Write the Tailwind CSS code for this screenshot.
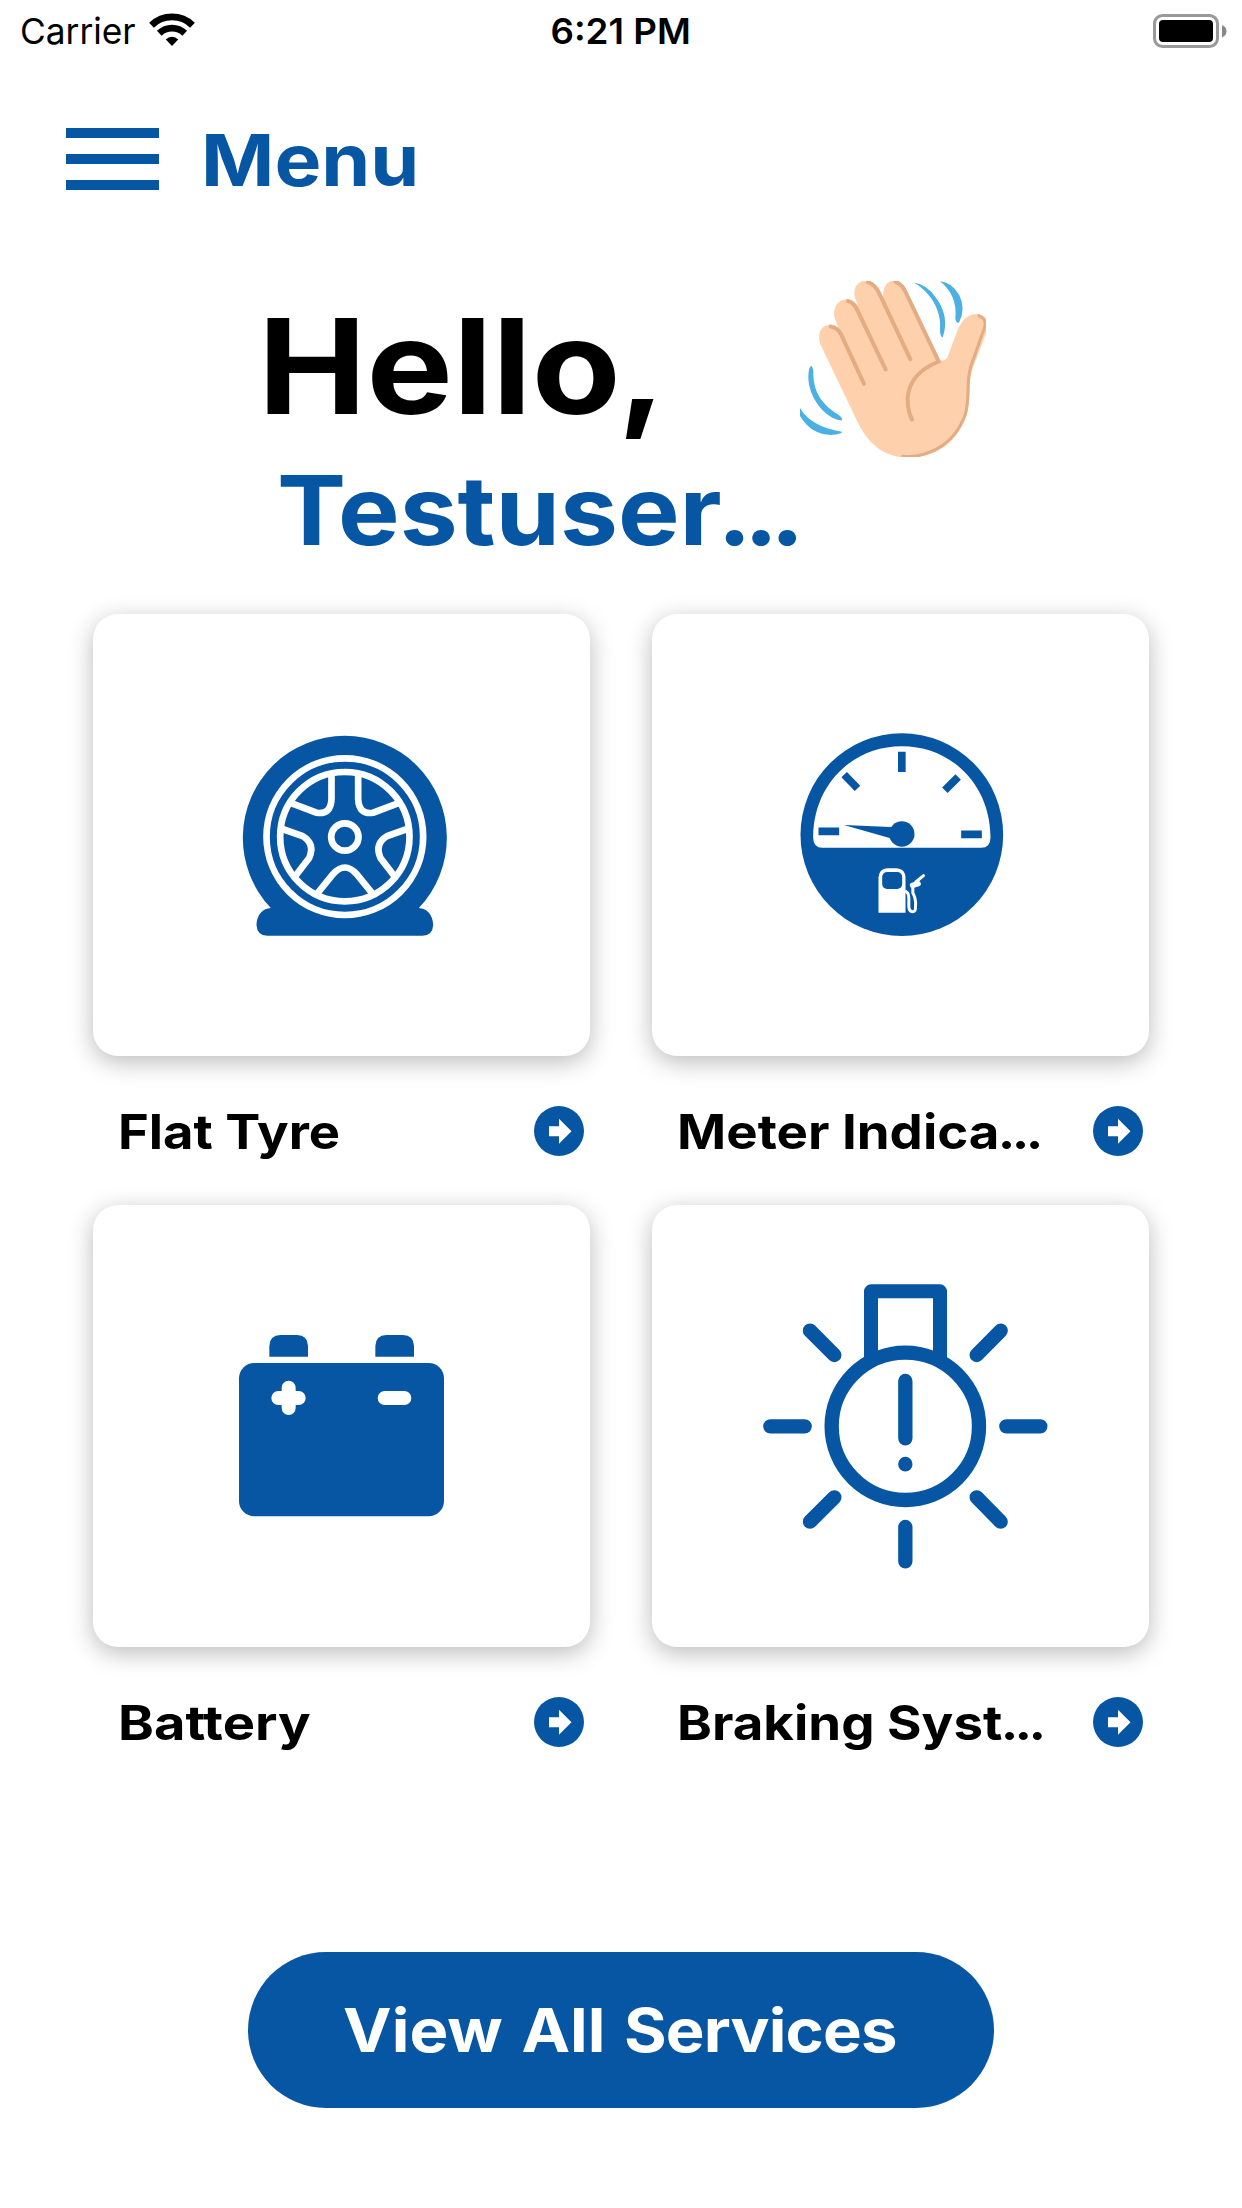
<!DOCTYPE html>
<html lang="en">
<head>
<meta charset="utf-8">
<title>Services</title>
<script src="https://cdn.jsdelivr.net/npm/@tailwindcss/browser@4"></script>
</head>
<body class="bg-white">
<div class="flex h-[2208px] w-[1242px] flex-col overflow-hidden bg-white font-['Inter',sans-serif] text-black">

  <!-- Status bar -->
  <div class="grid h-[62px] grid-cols-3 items-center pl-[20px] pr-[15px] text-[36px] leading-none">
    <div class="flex items-center">
      <span class="w-[129px] origin-left scale-x-[0.98] whitespace-nowrap">Carrier</span>
      <svg class="-mt-1 h-[33px] w-[46px]" viewBox="0 0 46 33" fill="none" stroke="#000">
        <path d="M2.5 12.2a29.5 29.5 0 0 1 41 0" stroke-width="6.8"/>
        <path d="M10.3 20.2a18.2 18.2 0 0 1 25.4 0" stroke-width="6.8"/>
        <path d="M23 33l-6.2-6.6a8.8 8.8 0 0 1 12.4 0z" fill="#000" stroke="none"/>
      </svg>
    </div>
    <span class="scale-x-[1.02] whitespace-nowrap pr-[5px] text-center font-semibold">6:21 PM</span>
    <svg class="h-[34px] w-[74px] justify-self-end" viewBox="0 0 74 34">
      <rect x="1.5" y="1.5" width="63" height="31" rx="8" fill="none" stroke="#999" stroke-width="3"/>
      <rect x="6" y="6" width="54" height="22" rx="4" fill="#000"/>
      <path d="M69 11q4.500 2 4.500 6.200t-4.500 6.200z" fill="#888"/>
    </svg>
  </div>

  <!-- Menu -->
  <div class="flex h-[196px] items-center pl-[65.5px] text-[#0756a4]">
    <div class="-mt-0.5 flex w-[93px] flex-col gap-4">
      <div class="h-[10px] bg-[#0756a4]"></div>
      <div class="h-[10px] bg-[#0756a4]"></div>
      <div class="h-[10px] bg-[#0756a4]"></div>
    </div>
    <span class="ml-[42px] origin-left scale-x-[1.094] text-7xl leading-none font-bold">Menu</span>
  </div>

  <!-- Greeting -->
  <div class="flex h-[216px] items-center pl-[258px]">
    <span class="w-[542px] origin-left scale-x-[1.1] text-[132px] leading-none font-bold">Hello<span class="-ml-[3px]">,</span></span>
    <svg class="mt-1.5 h-[176px] w-[186px] shrink-0" viewBox="60 63 558 527">
      <path d="M120 250C105 190 160 180 178 212L163 170C155 115 215 100 235 140L224 110C215 55 275 45 296 90L310 110C305 55 358 45 378 88L480 300Q497 305 503 290L532 212C550 160 600 148 620 178V215L578 325C562 370 575 420 558 470C520 570 445 594 375 592C300 588 260 540 232 484Z" fill="#ffd0ac"/>
      <g fill="none" stroke="#e3ac83" stroke-width="12" stroke-linecap="round">
        <path d="M152 199Q172 202 183 222L252 371"/>
        <path d="M204 123Q222 128 232 150L317 328"/>
        <path d="M264 66Q285 74 296 96L391 297"/>
        <path d="M346 65Q365 71 376 94L476 304Q388 340 383 413Q382 450 396 478"/>
        <path d="M597 167Q626 178 609 215L572 320C557 370 571 418 555 465C520 560 435 594 368 588" stroke-width="9"/>
      </g>
      <g fill="#4bb0e2">
        <path d="M402 68Q440 72 468 113Q510 170 488 232Q480 228 480 210C486 150 450 95 402 68Z"/>
        <path d="M480 63Q515 65 538 105Q558 145 537 187Q528 190 526 175Q533 105 480 63Z"/>
        <path d="M95 317Q86 319 85 348C84 410 135 476 185 481Q190 473 173 462C122 430 98 390 100 330Z"/>
        <path d="M58 440Q90 500 186 515Q188 521 160 524Q94 527 58 464Z"/>
      </g>
    </svg>
  </div>
  <div class="flex h-[72px] items-center pl-[277px] text-[#0756a4]">
    <span class="origin-left scale-x-[1.078] text-8xl leading-none font-bold">Testuser<span class="-ml-[4px] tracking-[-0.08em]">...</span></span>
  </div>

  <!-- Services -->
  <div class="mt-[68px] grid grid-cols-[497px_497px] gap-x-[62px] pl-[93px] text-5xl leading-none font-bold">
    <div>
      <div class="flex h-[442px] items-center justify-center rounded-[25px] bg-white shadow-[0_6px_24px_rgba(0,0,0,0.27)]">
        <svg class="size-[230px]" viewBox="-8.500 1 690 690">
          <path d="M123 565A306 306 0 1 1 567 565C590 566 610 585 610 617Q608 648 578 648H112Q82 648 80 617C80 585 100 566 123 565Z" fill="#0756a4"/>
          <g fill="none" stroke="#fff" stroke-width="20">
            <circle cx="345" cy="351" r="235"/>
            <circle cx="345" cy="351" r="194"/>
            <circle cx="345" cy="352" r="41"/>
            <path d="M305 168V238Q303 286 260 279L186 251"/>
            <path d="M385 168V238Q387 286 430 279L504 251"/>
            <path d="M158 328L218 349Q257 372 238 415L196 470"/>
            <path d="M532 328L472 349Q433 372 452 415L494 470"/>
            <path d="M262 522L310 463Q345 424 380 463L428 522"/>
          </g>
        </svg>
      </div>
      <div class="flex h-[149px] items-center justify-between pr-[6px] pl-[25px]">
        <span class="origin-left scale-x-[1.095] pt-0.5">Flat Tyre</span>
        <svg class="size-[50px]" viewBox="0 0 50 50"><circle cx="25" cy="25" r="25" fill="#0756a4"/><path d="M15 20.300H25V12.700L37.500 25.200L25 37.700V30.300H15Z" fill="#fff"/></svg>
      </div>
    </div>
    <div>
      <div class="flex h-[442px] items-center justify-center rounded-[25px] bg-white shadow-[0_6px_24px_rgba(0,0,0,0.27)]">
        <svg class="size-[230px]" viewBox="-11.500 0 690 690">
          <circle cx="336" cy="344" r="304" fill="#0756a4"/>
          <path d="M70 350C72 190 190 79 336 79S600 190 602 350Q603 383 574 383H98Q69 383 70 350Z" fill="#fff"/>
          <g stroke="#0756a4" stroke-width="23" fill="none">
            <path d="M336 95V156M163 164L203 205M505 171L465 211M86 334H148M514 343H576"/>
          </g>
          <circle cx="336" cy="342" r="38" fill="#0756a4"/>
          <path d="M162 315L320 322L310 357Z" fill="#0756a4"/>
          <path d="M266 578V472Q268 446 292 445H320Q346 447 347 472V578Z" fill="#fff"/>
          <rect x="277" y="456" width="60" height="51" rx="15" fill="#0756a4"/>
          <g fill="none" stroke="#fff" stroke-linecap="round" stroke-linejoin="round">
            <path d="M347 514Q357 517 357 535V560Q358 575 368 575T377 560Q379 535 369 519V497" stroke-width="9"/>
            <path d="M368 496L385 491" stroke-width="16"/>
            <path d="M378 486L401 467" stroke-width="9"/>
          </g>
        </svg>
      </div>
      <div class="flex h-[149px] items-center justify-between pr-[6px] pl-[25px]">
        <span class="origin-left scale-x-[1.1] pt-0.5 whitespace-nowrap">Meter Indica<span class="-ml-[1.5px] tracking-[-0.07em]">...</span></span>
        <svg class="size-[50px]" viewBox="0 0 50 50"><circle cx="25" cy="25" r="25" fill="#0756a4"/><path d="M15 20.300H25V12.700L37.500 25.200L25 37.700V30.300H15Z" fill="#fff"/></svg>
      </div>
    </div>
    <div>
      <div class="flex h-[442px] items-center justify-center rounded-[25px] bg-white shadow-[0_6px_24px_rgba(0,0,0,0.27)]">
        <svg class="h-[220px] w-[240px]" viewBox="6 18 720 660">
          <g fill="#0756a4">
            <path d="M148 140V108Q149 76 181 75H231Q263 76 264 108V140Z"/>
            <path d="M466 140V108Q467 76 499 75H549Q581 76 582 108V140Z"/>
            <rect x="57" y="159" width="615" height="460" rx="46"/>
          </g>
          <path d="M206 233V294M175 264H236M494 264H553" stroke="#fff" stroke-width="42" stroke-linecap="round"/>
        </svg>
      </div>
      <div class="flex h-[149px] items-center justify-between pr-[6px] pl-[25px]">
        <span class="origin-left scale-x-[1.13] pt-0.5">Battery</span>
        <svg class="size-[50px]" viewBox="0 0 50 50"><circle cx="25" cy="25" r="25" fill="#0756a4"/><path d="M15 20.300H25V12.700L37.500 25.200L25 37.700V30.300H15Z" fill="#fff"/></svg>
      </div>
    </div>
    <div>
      <div class="flex h-[442px] items-center justify-center rounded-[25px] bg-white shadow-[0_6px_24px_rgba(0,0,0,0.27)]">
        <svg class="size-[310px]" viewBox="-12 3 930 930" fill="none" stroke="#0756a4" stroke-width="43" stroke-linecap="round" stroke-linejoin="round">
          <circle cx="466" cy="469" r="221"/>
          <path d="M363 262V64H570V262" stroke-width="42"/>
          <path d="M466 333V505M466 582V583M466 771V874M61 469H164M769 469H871M180 182L253 255M752 182L680 255M253 682L180 755M680 682L752 755"/>
        </svg>
      </div>
      <div class="flex h-[149px] items-center justify-between pr-[6px] pl-[25px]">
        <span class="origin-left scale-x-[1.1] pt-0.5 whitespace-nowrap">Braking Syst<span class="-ml-[1.5px] tracking-[-0.07em]">...</span></span>
        <svg class="size-[50px]" viewBox="0 0 50 50"><circle cx="25" cy="25" r="25" fill="#0756a4"/><path d="M15 20.300H25V12.700L37.500 25.200L25 37.700V30.300H15Z" fill="#fff"/></svg>
      </div>
    </div>
  </div>

  <button class="mt-[156px] flex h-[156px] w-[746px] shrink-0 items-center justify-center self-center rounded-full bg-[#0756a4] pr-0.5 text-[60px] leading-none font-bold text-white">
    <span class="scale-x-[1.086] whitespace-nowrap [word-spacing:3px]">View All <span class="tracking-[-0.8px]">Services</span></span>
  </button>
</div>
</body>
</html>
